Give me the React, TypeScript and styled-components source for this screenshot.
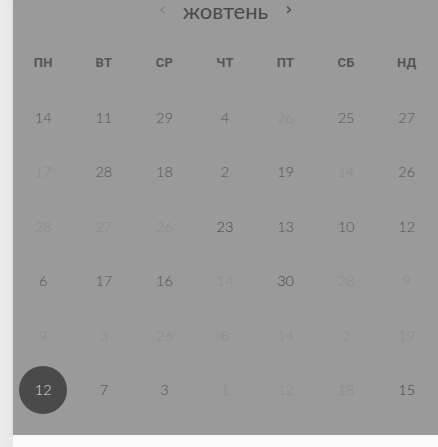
import React from "react";
import styled, { createGlobalStyle } from "styled-components";

const Global = createGlobalStyle`
  html, body { margin: 0; padding: 0; }
  body {
    background: #fbfbfb;
    font-family: Lato, "Noto Sans", sans-serif;
    -webkit-font-smoothing: antialiased;
  }
  #root { width: 438px; height: 447px; overflow: hidden; }
`;

const Page = styled.div`
  display: flex;
  width: 438px;
  height: 447px;
`;

const Strip = styled.div`
  width: 13px;
  flex: none;
  background: linear-gradient(to right, #ececec, #e6e6e6);
`;

const Main = styled.div`
  flex: 1;
  display: flex;
  flex-direction: column;
`;

const Panel = styled.div`
  height: 435px;
  background: #9a9a9a;
  box-shadow: 0 2px 4px rgba(0, 0, 0, 0.08);
  display: flex;
  flex-direction: column;
`;

const TitleBar = styled.div`
  height: 38.5px;
  display: flex;
  align-items: flex-start;
  justify-content: center;
  gap: 11px;
  margin-top: -3px;
`;

const Arrow = styled.span<{ $faint?: boolean }>`
  font-family: "DejaVu Sans", sans-serif;
  font-size: 18px;
  line-height: 24px;
  color: ${(p) => (p.$faint ? "#828282" : "#4a4a4a")};
`;

const Month = styled.span`
  font-size: 22px;
  line-height: 27px;
  color: #4a4a4a;
  padding: 0 6px;
`;

const Grid = styled.div`
  display: grid;
  grid-template-columns: repeat(7, 1fr);
  grid-auto-rows: 54.5px;
  padding-right: 1px;
`;

const Head = styled.div`
  display: flex;
  align-items: center;
  justify-content: center;
  font-family: Roboto, "Liberation Sans", sans-serif;
  font-size: 13px;
  font-weight: 700;
  color: #555;
  letter-spacing: 0.3px;
`;

type Tone = "n" | "m" | "d" | "s";

const Cell = styled.div`
  display: flex;
  align-items: center;
  justify-content: center;
`;

const Day = styled.span<{ $tone: Tone }>`
  display: flex;
  align-items: center;
  justify-content: center;
  width: 48px;
  height: 48px;
  border-radius: 50%;
  font-size: 14.5px;
  font-weight: 300;
  color: ${(p) =>
    p.$tone === "m" ? "#8a8a8a" : p.$tone === "d" ? "#444" : p.$tone === "s" ? "#dcdcdc" : "#555"};
  background: ${(p) => (p.$tone === "s" ? "#4a4a4a" : "transparent")};
`;

const Footer = styled.div`
  flex: 1;
  background: #fafafa;
`;

const heads = ["ПН", "ВТ", "СР", "ЧТ", "ПТ", "СБ", "НД"];

const rows: [string, Tone][][] = [
  [["14", "n"], ["11", "n"], ["29", "n"], ["4", "n"], ["26", "m"], ["25", "n"], ["27", "n"]],
  [["17", "m"], ["28", "n"], ["18", "n"], ["2", "n"], ["19", "n"], ["14", "m"], ["26", "n"]],
  [["28", "m"], ["27", "m"], ["26", "m"], ["23", "d"], ["13", "n"], ["10", "n"], ["12", "n"]],
  [["6", "n"], ["17", "n"], ["16", "n"], ["14", "m"], ["30", "d"], ["28", "m"], ["9", "m"]],
  [["9", "m"], ["3", "m"], ["26", "m"], ["8", "m"], ["14", "m"], ["2", "m"], ["19", "m"]],
  [["12", "s"], ["7", "d"], ["3", "n"], ["1", "m"], ["12", "m"], ["18", "m"], ["15", "d"]],
];

export default function App() {
  return (
    <>
      <Global />
      <Page>
        <Strip />
        <Main>
          <Panel>
            <TitleBar>
              <Arrow $faint>‹</Arrow>
              <Month>жовтень</Month>
              <Arrow>›</Arrow>
            </TitleBar>
            <Grid>
              {heads.map((h) => (
                <Head key={h}>{h}</Head>
              ))}
              {rows.flat().map(([d, t], i) => (
                <Cell key={i}>
                  <Day $tone={t}>{d}</Day>
                </Cell>
              ))}
            </Grid>
          </Panel>
          <Footer />
        </Main>
      </Page>
    </>
  );
}
